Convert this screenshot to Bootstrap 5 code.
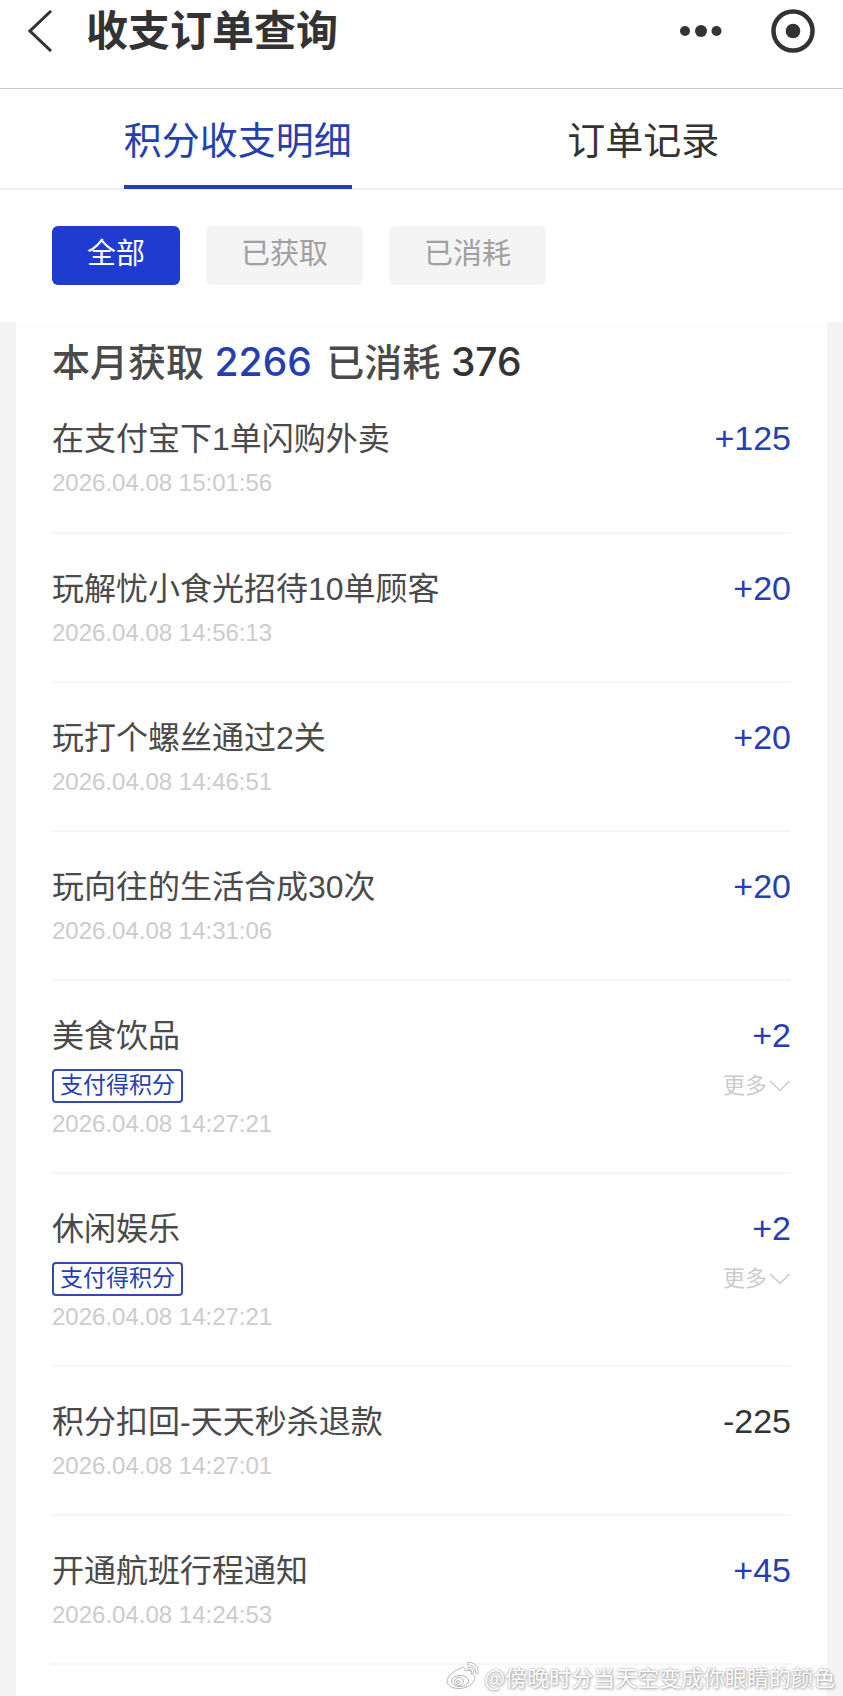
<!DOCTYPE html>
<html lang="zh-CN">
<head>
<meta charset="utf-8">
<meta name="viewport" content="width=device-width, initial-scale=1">
<title>收支订单查询</title>
<link href="https://cdn.jsdelivr.net/npm/bootstrap@5.3.0/dist/css/bootstrap.min.css" rel="stylesheet">
<style>
  :root { --ink: #333; --text: #4a4a4a; --blue: #263fae; --brand: #203bcf; --mute: #ccc; --soft: #f4f4f4; }
  body { font-family: "Liberation Sans", "Noto Sans CJK SC", sans-serif; color: var(--text); background: #fff; }
  .plain-btn { border: 0; background: none; padding: 0; color: inherit; display: flex; }
  .app-head { height: 89px; padding: 0 28px 27px; border-bottom: 1px solid #c8c8c8; color: var(--ink); }
  .app-head h1 { font-size: 42px; line-height: 62px; padding-top: 2px; font-weight: 700; margin-left: 33px; }
  .head-tools { gap: 48px; }
  .tab-bar { height: 101px; padding: 0 16px; border-bottom: 2px solid #eee; }
  .tab-bar a { font-size: 38px; line-height: 96px; height: 100px; padding-top: 4px; color: var(--ink); text-decoration: none; }
  .tab-bar a.active { color: var(--blue); border-bottom: 4px solid var(--blue); }
  .filters { padding: 36px 52px 37px; gap: 26px; }
  .filters button { height: 59px; padding: 0 35px; border: 0; border-radius: 6px; font-size: 29px; line-height: 56px; padding-bottom: 3px; background: var(--soft); color: #a0a0a0; }
  .filters button.active { background: var(--brand); color: #fff; }
  .page-body { background: var(--soft); padding: 0 16px; }
  .sheet { background: #fefefe; padding: 19px 36px 30px; }
  .summary { font-size: 38px; line-height: 42px; font-weight: 500; }
  .summary b { font-family: Inter, sans-serif; font-size: 39px; font-weight: 500; }
  .summary .c-blue { margin-right: 4px; }
  .c-blue { color: var(--blue); }
  .c-ink { color: var(--ink); }
  .entry { padding: 34px 0 31px; border-bottom: 2px solid #f6f6f6; }
  .entry + .entry { padding-bottom: 30px; }
  .entry h2 { font-size: 32px; line-height: 42px; font-weight: 400; }
  .amount { font-size: 34px; line-height: 40px; }
  .stamp { font-size: 24px; line-height: 36px; margin-top: 5px; color: var(--mute); display: block; }
  .tag-row { margin-top: 12px; height: 34px; }
  .tag-row + .stamp { margin-top: 3px; }
  .tag { border: 2px solid #3549a8; border-radius: 4px; padding: 0 6px; font-size: 23px; line-height: 28px; height: 34px; color: var(--blue); }
  .more { font-size: 22px; line-height: 34px; color: var(--mute); gap: 2px; }
  .watermark { font-family: "Noto Sans CJK SC", sans-serif; right: 8px; bottom: 4px; height: 32px; gap: 4px; font-size: 22px; line-height: 32px; color: #fff; text-shadow: 0 0 2px #999, 1px 1px 3px #aaa; pointer-events: none; }
</style>
</head>
<body>
<div class="position-relative min-vh-100 d-flex flex-column">
  <header class="app-head d-flex align-items-center">
    <button class="plain-btn" type="button" aria-label="返回">
      <svg width="25" height="42" viewBox="0 0 25 42" fill="none" stroke="currentColor" stroke-width="3"><path d="M23 1 2 21l21 20"/></svg>
    </button>
    <h1 class="mb-0 text-nowrap">收支订单查询</h1>
    <div class="head-tools d-flex align-items-center ms-auto">
      <button class="plain-btn" type="button" aria-label="更多操作">
        <svg width="44" height="14" viewBox="0 0 44 14" fill="currentColor"><circle cx="6" cy="7" r="5"/><circle cx="22" cy="7" r="6"/><circle cx="37.500" cy="7" r="5"/></svg>
      </button>
      <button class="plain-btn" type="button" aria-label="关闭">
        <svg width="44" height="44" viewBox="0 0 44 44"><circle cx="22" cy="22" r="19.500" fill="none" stroke="currentColor" stroke-width="4.500"/><circle cx="22" cy="22" r="7.300" fill="currentColor"/></svg>
      </button>
    </div>
  </header>

  <nav class="tab-bar d-flex justify-content-around">
    <a class="active" href="#points" aria-current="page">积分收支明细</a>
    <a href="#orders">订单记录</a>
  </nav>

  <div class="filters d-flex">
    <button class="active" type="button">全部</button>
    <button type="button">已获取</button>
    <button type="button">已消耗</button>
  </div>

  <main class="page-body flex-grow-1 d-flex" id="points">
    <section class="sheet flex-grow-1">
      <p class="summary mb-0">本月获取 <b class="c-blue">2266</b> 已消耗 <b class="c-ink">376</b></p>
      <ul class="list-unstyled mb-0">
        <li class="entry">
          <div class="d-flex justify-content-between"><h2 class="mb-0">在支付宝下1单闪购外卖</h2><span class="amount c-blue">+125</span></div>
          <time class="stamp">2026.04.08 15:01:56</time>
        </li>
        <li class="entry">
          <div class="d-flex justify-content-between"><h2 class="mb-0">玩解忧小食光招待10单顾客</h2><span class="amount c-blue">+20</span></div>
          <time class="stamp">2026.04.08 14:56:13</time>
        </li>
        <li class="entry">
          <div class="d-flex justify-content-between"><h2 class="mb-0">玩打个螺丝通过2关</h2><span class="amount c-blue">+20</span></div>
          <time class="stamp">2026.04.08 14:46:51</time>
        </li>
        <li class="entry">
          <div class="d-flex justify-content-between"><h2 class="mb-0">玩向往的生活合成30次</h2><span class="amount c-blue">+20</span></div>
          <time class="stamp">2026.04.08 14:31:06</time>
        </li>
        <li class="entry">
          <div class="d-flex justify-content-between"><h2 class="mb-0">美食饮品</h2><span class="amount c-blue">+2</span></div>
          <div class="tag-row d-flex justify-content-between">
            <span class="tag">支付得积分</span>
            <button class="plain-btn more align-items-center" type="button">更多<svg width="22" height="12" viewBox="0 0 22 12" fill="none" stroke="currentColor" stroke-width="1.500"><path d="m1 1 10 9.500L20.500 1"/></svg></button>
          </div>
          <time class="stamp">2026.04.08 14:27:21</time>
        </li>
        <li class="entry">
          <div class="d-flex justify-content-between"><h2 class="mb-0">休闲娱乐</h2><span class="amount c-blue">+2</span></div>
          <div class="tag-row d-flex justify-content-between">
            <span class="tag">支付得积分</span>
            <button class="plain-btn more align-items-center" type="button">更多<svg width="22" height="12" viewBox="0 0 22 12" fill="none" stroke="currentColor" stroke-width="1.500"><path d="m1 1 10 9.500L20.500 1"/></svg></button>
          </div>
          <time class="stamp">2026.04.08 14:27:21</time>
        </li>
        <li class="entry">
          <div class="d-flex justify-content-between"><h2 class="mb-0">积分扣回-天天秒杀退款</h2><span class="amount c-ink">-225</span></div>
          <time class="stamp">2026.04.08 14:27:01</time>
        </li>
        <li class="entry">
          <div class="d-flex justify-content-between"><h2 class="mb-0">开通航班行程通知</h2><span class="amount c-blue">+45</span></div>
          <time class="stamp">2026.04.08 14:24:53</time>
        </li>
      </ul>
    </section>
  </main>

  <div class="watermark position-absolute d-flex align-items-center text-nowrap">
    <svg width="34" height="30" viewBox="0 0 34 30" fill="#fff" stroke="#b4b4b4" stroke-width="1">
      <path d="M13 8c3-2.500 6.500-2 6 2 4-1.500 7.500-.5 6.500 3 3 1 4 3.500 2.500 6.500-2.500 5-8.500 8-15 8C6 27.500 1 24.500 1 20 1 16 7 10 13 8z"/>
      <ellipse cx="14" cy="20" rx="8.500" ry="5.500"/>
      <ellipse cx="13" cy="20.500" rx="4.500" ry="4"/>
      <circle cx="12" cy="21" r="1.500"/>
      <path d="M21.500 1.500C28 .5 33 6 32 12.500q-1.500 1-2.500-.5c.5-5-3-8.500-7.500-8q-1.500-1-.5-2.500zM22 6.500c4-.8 6 1.800 5.500 5-.7.900-1.500.600-2-.2.200-2-1-3-3-2.800q-1.200-.8-.5-2z"/>
    </svg>
    <span>@傍晚时分当天空变成你眼睛的颜色</span>
  </div>
</div>
<script src="https://cdn.jsdelivr.net/npm/bootstrap@5.3.0/dist/js/bootstrap.bundle.min.js"></script>
</body>
</html>
